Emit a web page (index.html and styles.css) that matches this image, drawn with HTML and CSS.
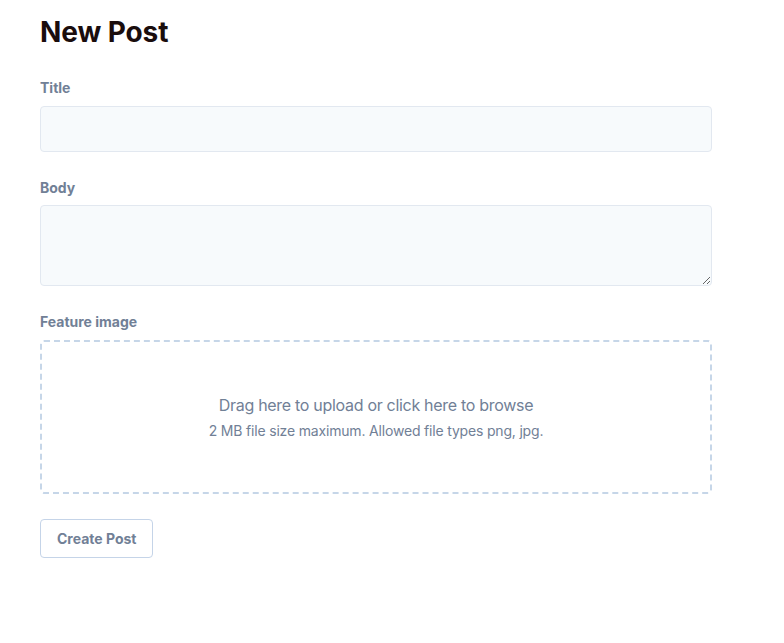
FILE: index.html
```html
<!DOCTYPE html>
<html>
<head>
<meta charset="utf-8">
<link rel="stylesheet" href="styles.css">
</head>
<body>
<div class="page">
  <h1 class="title">New Post</h1>
  <form class="form">
    <div class="field">
      <label class="label">Title</label>
      <input class="input" type="text">
    </div>
    <div class="field">
      <label class="label label-tight">Body</label>
      <textarea class="textarea"></textarea>
    </div>
    <div class="field field-last">
      <label class="label">Feature image</label>
      <div class="dropzone">
        <div class="drop-main">Drag here to upload or click here to browse</div>
        <div class="drop-sub">2 MB file size maximum. Allowed file types png, jpg.</div>
      </div>
    </div>
    <div class="actions">
      <button class="button" type="button">Create Post</button>
    </div>
  </form>
</div>
</body>
</html>
```
FILE: styles.css
```css
* { box-sizing: border-box; }
body {
  margin: 0;
  background: #fff;
  font-family: Inter, "Noto Sans", sans-serif;
}
.page {
  padding: 12px 72px 40px 40px;
}
.title {
  margin: 0;
  font-size: 28px;
  line-height: 40px;
  font-weight: 700;
  color: #1a0d0d;
  letter-spacing: -0.1px;
}
.form {
  display: flex;
  flex-direction: column;
  margin-top: 26px;
}
.field {
  display: flex;
  flex-direction: column;
  margin-bottom: 26px;
}
.field-last {
  margin-bottom: 25px;
}
.label {
  font-size: 14px;
  font-weight: 700;
  color: #718096;
  line-height: 20px;
  margin-bottom: 8px;
}
.label-tight {
  margin-bottom: 7px;
}
.input {
  height: 46px;
  background: #f7fafc;
  border: 1px solid #e2e8f0;
  border-radius: 4px;
  outline: none;
}
.textarea {
  height: 81px;
  background: #f7fafc;
  border: 1px solid #e2e8f0;
  border-radius: 4px;
  outline: none;
  resize: vertical;
}
.dropzone {
  height: 154px;
  border: 2px dashed #c6d6e8;
  border-radius: 4px;
  display: flex;
  flex-direction: column;
  align-items: center;
  justify-content: center;
  color: #718096;
}
.drop-main {
  font-size: 16px;
  line-height: 24px;
  letter-spacing: -0.3px;
}
.drop-sub {
  font-size: 14px;
  line-height: 20px;
  letter-spacing: -0.18px;
  margin-top: 4px;
}
.actions {
  display: flex;
}
.button {
  height: 39px;
  padding: 0 16px;
  background: #fff;
  border: 1px solid #c5d4e8;
  border-radius: 4px;
  font-family: Inter, "Noto Sans", sans-serif;
  font-size: 14px;
  font-weight: 700;
  color: #718096;
}
```
